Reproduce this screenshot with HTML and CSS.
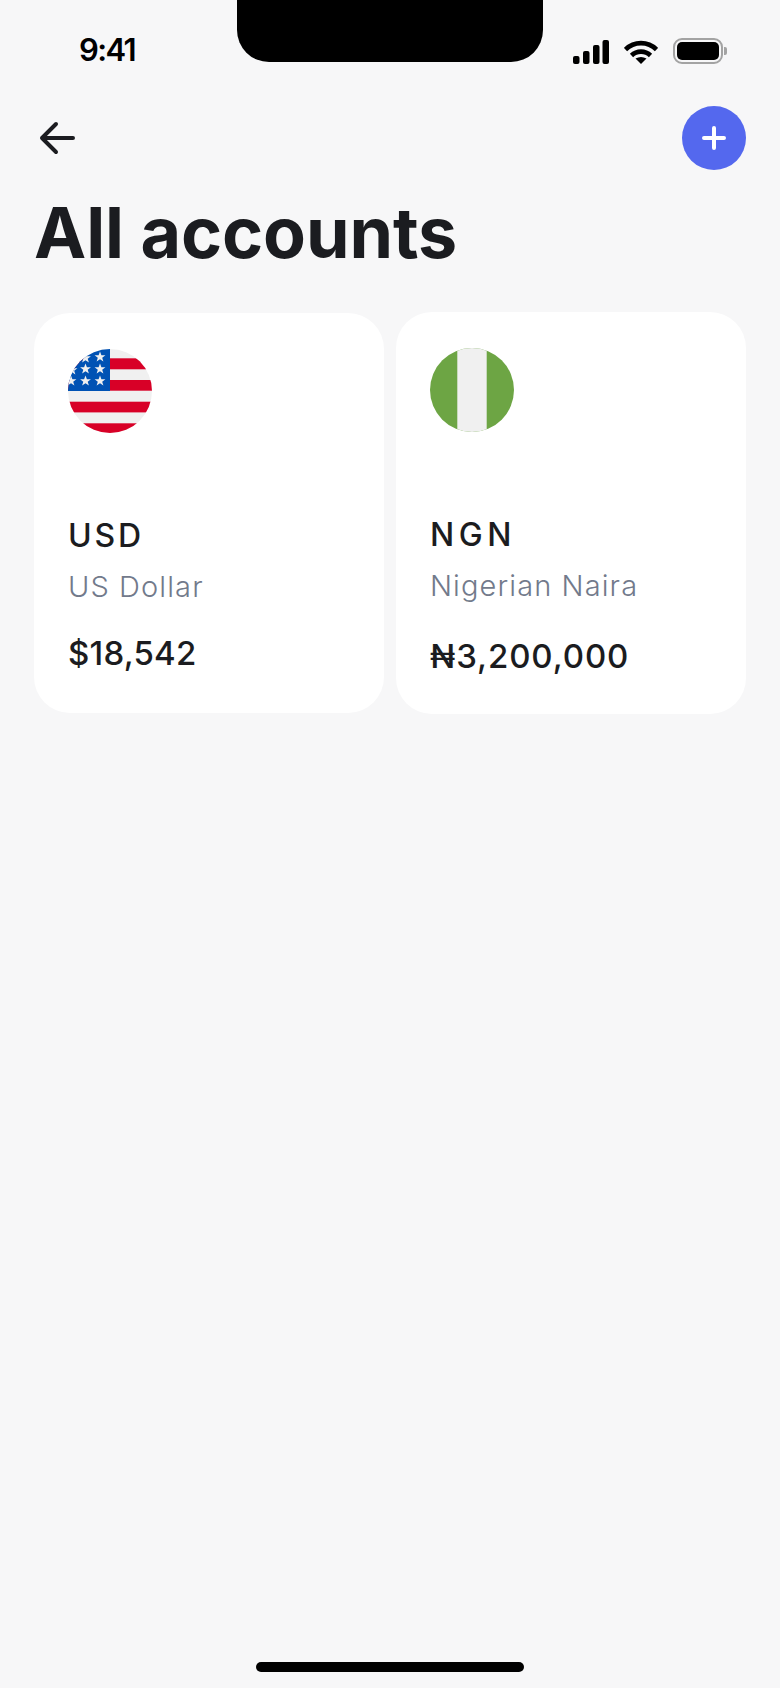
FILE: index.html
```html
<!DOCTYPE html>
<html lang="en">
<head>
  <meta charset="UTF-8">
  <title>All accounts</title>
  <link rel="stylesheet" href="styles.css">
</head>
<body>
  <div class="screen">
    <!-- status bar -->
    <div class="status-bar">
      <span class="time">9:41</span>
      <div class="notch"></div>
      <div class="status-icons">
        <svg class="signal" width="36" height="24" viewBox="0 0 36 24">
          <rect x="0" y="16" width="6.5" height="8" rx="2" />
          <rect x="10" y="11" width="6.5" height="13" rx="2" />
          <rect x="20" y="5" width="6.5" height="19" rx="2" />
          <rect x="29.5" y="0" width="6.5" height="24" rx="2" />
        </svg>
        <svg class="wifi" width="34" height="24" viewBox="0 0 34 24">
          <path d="M1.5 9.5 A22 22 0 0 1 32.5 9.5" fill="none" stroke="#000" stroke-width="4.6" />
          <path d="M7.5 15.5 A13.5 13.5 0 0 1 26.5 15.5" fill="none" stroke="#000" stroke-width="4.6" />
          <path d="M11.5 18.5 Q17 15.5 22.5 18.5 L17 24 Z" />
        </svg>
        <div class="battery">
          <div class="battery-body"><div class="battery-fill"></div></div>
          <div class="battery-cap"></div>
        </div>
      </div>
    </div>

    <!-- top nav -->
    <div class="nav">
      <svg class="back" width="38" height="34" viewBox="0 0 38 34">
        <path d="M35 17 H4 M18 3 L4 17 L18 31" fill="none" stroke="#1b1c20" stroke-width="4" stroke-linecap="round" stroke-linejoin="round" />
      </svg>
      <button class="add-btn">
        <svg width="24" height="24" viewBox="0 0 24 24">
          <path d="M2 12 H22 M12 2 V22" fill="none" stroke="#fff" stroke-width="4" stroke-linecap="round" />
        </svg>
      </button>
    </div>

    <h1>All accounts</h1>

    <div class="accounts">
      <div class="card card-usd">
        <svg class="flag" width="84" height="84" viewBox="0 0 84 84">
          <defs>
            <clipPath id="circleClip"><circle cx="42" cy="42" r="42" /></clipPath>
            <polygon id="star" points="0,-5.6 1.4,-1.8 5.4,-1.7 2.2,0.7 3.4,4.5 0,2.3 -3.4,4.5 -2.2,0.7 -5.4,-1.7 -1.4,-1.8" fill="#f0f0f0" />
          </defs>
          <g clip-path="url(#circleClip)">
            <rect width="84" height="84" fill="#f0f0f0" />
            <rect y="9.3" width="84" height="11" fill="#d80027" />
            <rect y="31" width="84" height="10.7" fill="#d80027" />
            <rect y="52.7" width="84" height="10.7" fill="#d80027" />
            <rect y="74.3" width="84" height="10" fill="#d80027" />
            <rect width="42" height="42" fill="#0052b4" />
            <use href="#star" x="32" y="8" />
            <use href="#star" x="17.5" y="9" />
            <use href="#star" x="32" y="20" />
            <use href="#star" x="17.5" y="20" />
            <use href="#star" x="32" y="32" />
            <use href="#star" x="17.5" y="32" />
            <use href="#star" x="3" y="32" />
            <use href="#star" x="4" y="21" />
          </g>
        </svg>
        <div class="code">USD</div>
        <div class="name">US Dollar</div>
        <div class="amount">$18,542</div>
      </div>

      <div class="card card-ngn">
        <svg class="flag" width="84" height="84" viewBox="0 0 84 84">
          <g clip-path="url(#circleClip)">
            <rect width="84" height="84" fill="#6da544" />
            <rect x="27.3" width="29.4" height="84" fill="#f0f0f0" />
          </g>
        </svg>
        <div class="code">NGN</div>
        <div class="name">Nigerian Naira</div>
        <div class="amount">₦3,200,000</div>
      </div>
    </div>

    <div class="home-bar"></div>
  </div>
</body>
</html>
```

FILE: styles.css
```css
* {
  box-sizing: border-box;
}

body {
  margin: 0;
  background-color: #f7f7f8;
  font-family: "Inter", sans-serif;
  color: #1b1c20;
}

.screen {
  position: relative;
  height: 1688px;
  overflow: hidden;
}

.status-bar {
  display: flex;
  justify-content: space-between;
  height: 106px;
  padding: 32px 53px 0 79px;
}

.time {
  font-size: 31px;
  font-weight: 600;
  line-height: 36px;
  letter-spacing: -1.6px;
  color: #000;
}

.notch {
  position: absolute;
  top: 0;
  left: 237px;
  width: 306px;
  height: 62px;
  background-color: #000;
  border-radius: 0 0 32px 32px;
}

.status-icons {
  display: flex;
  gap: 15px;
  height: 32px;
  padding-top: 6px;
}

.signal {
  margin-top: 2px;
}

.wifi {
  margin-top: 2px;
}

.battery {
  display: flex;
  align-items: center;
  gap: 1px;
  height: 26px;
}

.battery-body {
  width: 50px;
  height: 26px;
  padding: 2px;
  border: 2px solid #a3a3a3;
  border-radius: 9px;
}

.battery-fill {
  height: 100%;
  background-color: #000;
  border-radius: 5px;
}

.battery-cap {
  width: 3px;
  height: 8px;
  background-color: #a3a3a3;
  border-radius: 0 2px 2px 0;
}

.nav {
  display: flex;
  justify-content: space-between;
  align-items: center;
  height: 64px;
  padding: 0 34px 0 38px;
}

.add-btn {
  display: flex;
  justify-content: center;
  align-items: center;
  width: 64px;
  height: 64px;
  padding: 0;
  background-color: #5468ee;
  border: none;
  border-radius: 50%;
}

h1 {
  margin: 22px 0 0 34px;
  font-size: 70px;
  font-weight: 700;
  line-height: 82px;
  letter-spacing: -0.1px;
}

.accounts {
  display: grid;
  grid-template-columns: 350px 350px;
  gap: 12px;
  align-items: start;
  margin: 38px 34px 0;
}

.card {
  background-color: #fff;
  border-radius: 36px;
  padding: 36px 34px 0;
}

.card-usd {
  height: 400px;
  margin-top: 1px;
}

.card-ngn {
  height: 402px;
}

.flag {
  display: block;
}

.code {
  margin-top: 85px;
  font-size: 32px;
  font-weight: 500;
  line-height: 36px;
  letter-spacing: 2.8px;
}

.card-ngn .code {
  letter-spacing: 4.5px;
}

.name {
  margin-top: 15px;
  font-size: 29px;
  font-weight: 300;
  line-height: 36px;
  letter-spacing: 1.1px;
  color: #727a8b;
}

.amount {
  margin-top: 28px;
  font-size: 33px;
  font-weight: 500;
  line-height: 40px;
  letter-spacing: 0.2px;
}

.card-ngn .amount {
  margin-top: 32px;
  letter-spacing: 0.9px;
}

.home-bar {
  position: absolute;
  left: 256px;
  bottom: 16px;
  width: 268px;
  height: 10px;
  background-color: #000;
  border-radius: 5px;
}
```
